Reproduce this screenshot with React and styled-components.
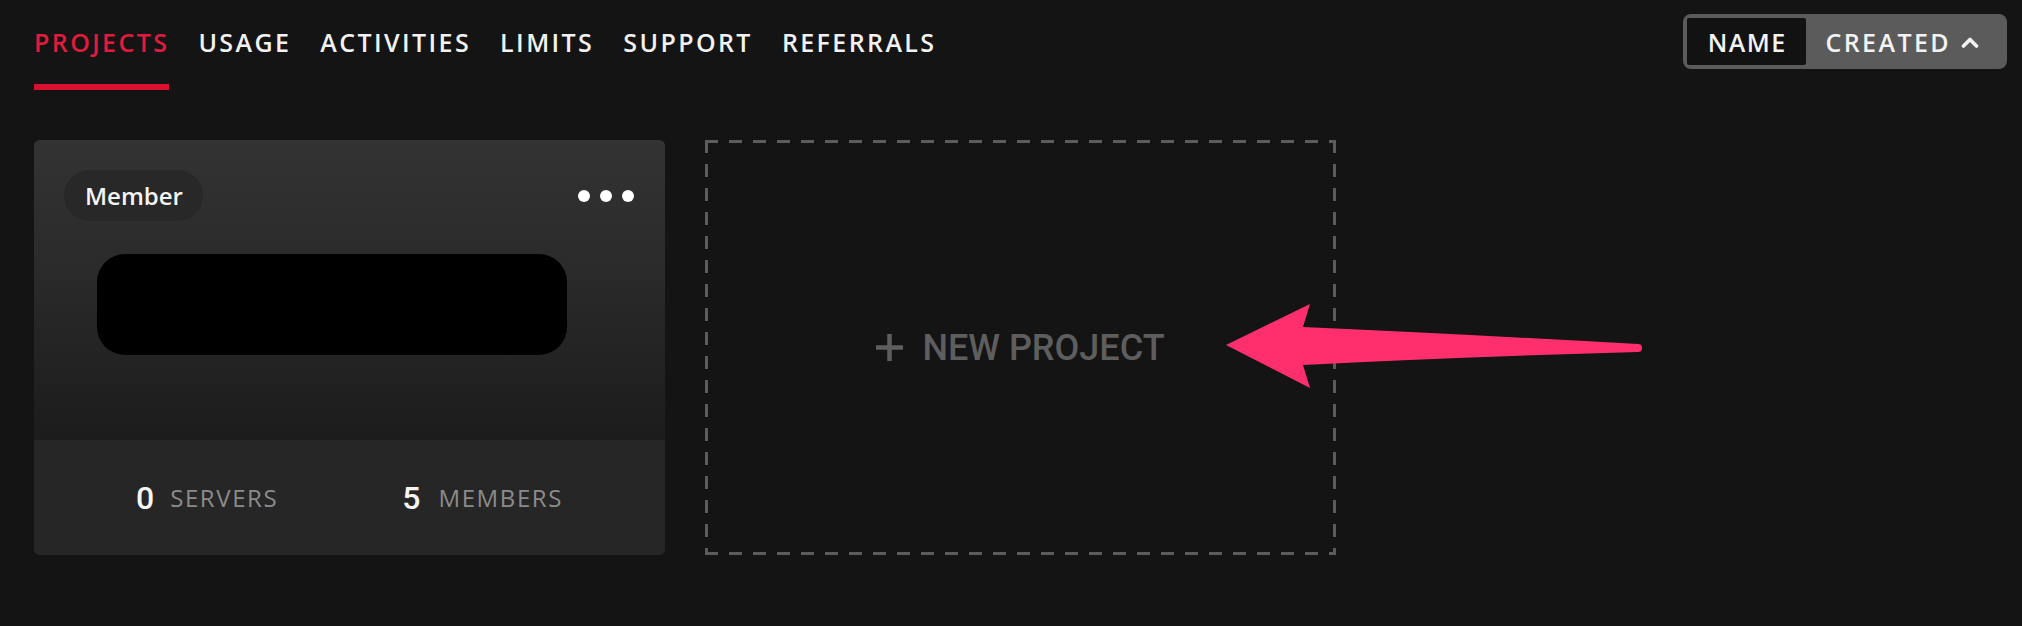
import styled, { createGlobalStyle } from "styled-components";

const GlobalStyle = createGlobalStyle`
    html, body {
        margin: 0;
        padding: 0;
        background: #141414;
    }
    body {
        font-family: "Open Sans", "Liberation Sans", sans-serif;
        color: #f2f2f2;
    }
    #root {
        min-height: 626px;
    }
`;

const tabs = ["Projects", "Usage", "Activities", "Limits", "Support", "Referrals"];

const Page = styled.div`
    position: relative;
    min-height: 626px;
`;

const Header = styled.header`
    display: flex;
    justify-content: space-between;
    align-items: flex-start;
    padding: 0 15px 0 34px;
`;

const Nav = styled.nav`
    display: flex;
    gap: 29px;
`;

const Tab = styled.div`
    display: flex;
    flex-direction: column;
    align-items: stretch;
    padding-top: 27px;
    cursor: pointer;

    .tab__label {
        font-size: 25px;
        line-height: 30px;
        font-weight: 600;
        letter-spacing: 2.4px;
        text-transform: uppercase;
        color: ${(p) => (p.$active ? "#e21b3c" : "#f2f2f2")};
    }

    .tab__bar {
        margin-top: 27px;
        height: 6px;
        background: ${(p) => (p.$active ? "#db0f2e" : "transparent")};
    }
`;

const SortToggle = styled.div`
    display: flex;
    margin-top: 14px;
    padding: 4px;
    height: 47px;
    background: #5b5b5b;
    border-radius: 8px;
`;

const SortButton = styled.button`
    display: flex;
    align-items: center;
    gap: 10px;
    border: 0;
    margin: 0;
    padding: ${(p) => (p.$active ? "0 19px 0 21px" : "0 24px 0 20px")};
    background: ${(p) => (p.$active ? "#121212" : "transparent")};
    color: #f3f3f3;
    font-family: "Open Sans", "Liberation Sans", sans-serif;
    font-size: 25px;
    font-weight: 600;
    letter-spacing: ${(p) => (p.$active ? "1.4px" : "2.4px")};
    border-radius: 2px;
`;

const Grid = styled.main`
    display: grid;
    grid-template-columns: 631px 631px;
    gap: 40px;
    padding: 50px 0 0 34px;
`;

const Card = styled.section`
    display: flex;
    flex-direction: column;
    height: 415px;
    border-radius: 6px;
    overflow: hidden;
    background: #262626;
`;

const CardBody = styled.div`
    height: 300px;
    box-sizing: border-box;
    padding: 30px 30px 0 30px;
    background: linear-gradient(180deg, #333333 0%, #2a2a2a 45%, #1c1c1c 100%);
`;

const CardTop = styled.div`
    display: flex;
    justify-content: space-between;
    align-items: center;
`;

const RoleBadge = styled.span`
    display: inline-flex;
    align-items: center;
    height: 51px;
    padding: 0 20px 0 21px;
    border-radius: 26px;
    background: #282828;
    font-size: 24px;
    font-weight: 600;
    color: #f4f4f4;
`;

const Dots = styled.div`
    display: flex;
    gap: 10px;
    margin-right: 1px;

    span {
        width: 12px;
        height: 12px;
        border-radius: 50%;
        background: #ffffff;
    }
`;

const Redacted = styled.div`
    width: 470px;
    height: 101px;
    margin: 33px 0 0 33px;
    border-radius: 28px;
    background: #000000;
`;

const CardFooter = styled.footer`
    flex: 1;
    display: flex;
    justify-content: center;
    align-items: center;
    gap: 124px;
    background: #262626;
`;

const Stat = styled.div`
    display: flex;
    align-items: center;
    gap: ${(p) => p.$gap}px;

    .stat__value {
        font-family: Roboto, "Liberation Sans", sans-serif;
        font-size: 32px;
        font-weight: 500;
        color: #f5f5f5;
    }

    .stat__label {
        font-size: 24px;
        font-weight: 400;
        letter-spacing: 1.6px;
        color: #8b8b8b;
    }
`;

const dash = "#5c5c5c";

const NewProject = styled.button`
    display: flex;
    justify-content: center;
    align-items: center;
    gap: 19px;
    height: 415px;
    margin: 0;
    padding: 0;
    border: 0;
    background:
        linear-gradient(90deg, ${dash} 54%, transparent 54%) 0 0 / 24px 3px repeat-x,
        linear-gradient(90deg, ${dash} 54%, transparent 54%) 0 100% / 24px 3px repeat-x,
        linear-gradient(180deg, ${dash} 54%, transparent 54%) 0 0 / 3px 24px repeat-y,
        linear-gradient(180deg, ${dash} 54%, transparent 54%) 100% 0 / 3px 24px repeat-y;
    color: #5e5e5e;
    font-family: Roboto, "Liberation Sans", sans-serif;
    font-size: 36px;
    font-weight: 500;
    cursor: pointer;
`;

const Arrow = styled.svg`
    position: absolute;
    left: 1220px;
    top: 300px;
`;

const PlusIcon = () => (
    <svg width="27" height="27" viewBox="0 0 27 27">
        <rect x="11.25" y="0" width="4.5" height="27" fill="#5e5e5e" />
        <rect x="0" y="11.25" width="27" height="4.5" fill="#5e5e5e" />
    </svg>
);

const ChevronUp = () => (
    <svg width="18" height="12" viewBox="0 0 18 12">
        <path d="M2.5 10 L9 3.5 L15.5 10" fill="none" stroke="#f3f3f3" strokeWidth="3.6" strokeLinecap="round" strokeLinejoin="round" />
    </svg>
);

export default function App() {
    return (
        <Page>
            <GlobalStyle />
            <Header>
                <Nav>
                    {tabs.map((tab, i) => (
                        <Tab key={tab} $active={i === 0}>
                            <div className="tab__label">{tab}</div>
                            <div className="tab__bar" />
                        </Tab>
                    ))}
                </Nav>
                <SortToggle>
                    <SortButton $active>NAME</SortButton>
                    <SortButton>
                        CREATED
                        <ChevronUp />
                    </SortButton>
                </SortToggle>
            </Header>

            <Grid>
                <Card>
                    <CardBody>
                        <CardTop>
                            <RoleBadge>Member</RoleBadge>
                            <Dots>
                                <span />
                                <span />
                                <span />
                            </Dots>
                        </CardTop>
                        <Redacted />
                    </CardBody>
                    <CardFooter>
                        <Stat $gap={16}>
                            <span className="stat__value">0</span>
                            <span className="stat__label">SERVERS</span>
                        </Stat>
                        <Stat $gap={18}>
                            <span className="stat__value">5</span>
                            <span className="stat__label">MEMBERS</span>
                        </Stat>
                    </CardFooter>
                </Card>
                <NewProject>
                    <PlusIcon />
                    NEW PROJECT
                </NewProject>
            </Grid>

            <Arrow width="425" height="95" viewBox="0 0 425 95">
                <path
                    d="M6 45 L90 4 L83 27 Q240 34 418 44 A4 4 0 0 1 418 52 Q240 57 83 65 L90 88 Z"
                    fill="#ff2f6d"
                />
            </Arrow>
        </Page>
    );
}
